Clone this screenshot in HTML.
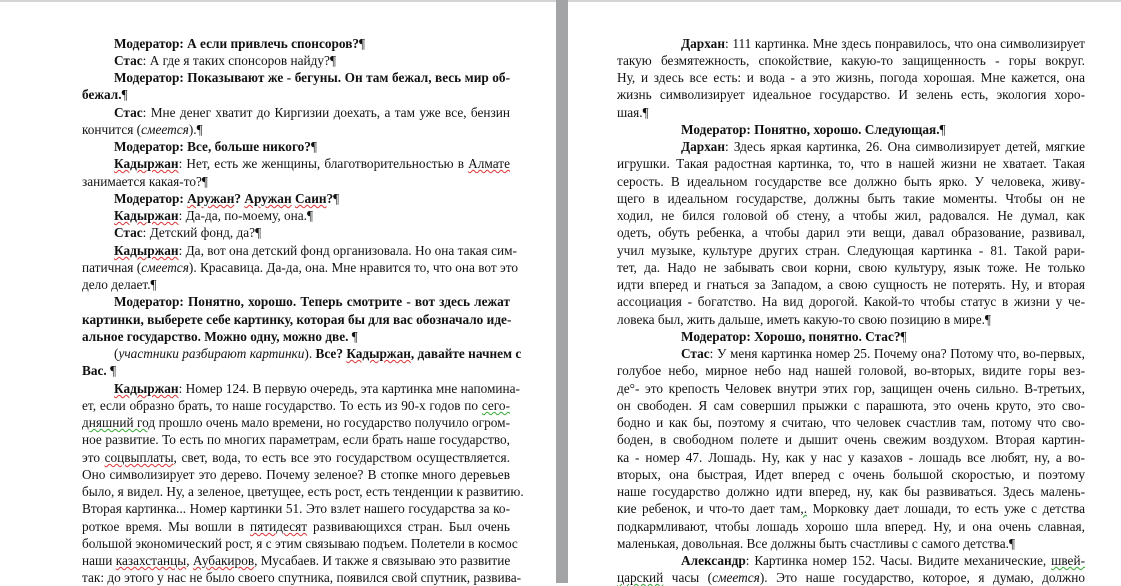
<!DOCTYPE html>
<html><head><meta charset="utf-8"><style>
body{margin:0;width:1121px;height:583px;background:#fff;position:relative;overflow:hidden;font-family:"Liberation Serif","DejaVu Serif",serif;font-size:13.3px;color:#111}
.top{position:absolute;left:0;top:0;width:1121px;height:2px;background:#d4d4d4}
.gap{position:absolute;left:556px;top:0;width:12px;height:583px;background:#a3a4a6}
.l{position:absolute;white-space:nowrap;line-height:17px;height:17px;text-align:justify;text-align-last:justify}
.e{text-align-last:left}
.L{left:82px;width:428px}.Li{left:114px;width:396px}
.R{left:617px;width:468px}.Ri{left:681px;width:404px}
.u{text-decoration:underline wavy #d33;text-decoration-thickness:1px}
.g{text-decoration:underline wavy #3a3;text-decoration-thickness:1px}
</style></head><body>
<div class="top"></div><div class="gap"></div>

<div class="l Li e" style="top:35px"><b>Модератор: А если привлечь спонсоров?</b>¶</div>
<div class="l Li e" style="top:52px"><b>Стас</b>: А где я таких спонсоров найду?¶</div>
<div class="l Li" style="top:69px"><b>Модератор: Показывают же - бегуны. Он там бежал, весь мир об-</b></div>
<div class="l L e" style="top:86px"><b>бежал.</b>¶</div>
<div class="l Li" style="top:104px"><b>Стас</b>: Мне денег хватит до Киргизии доехать, а там уже все, бензин</div>
<div class="l L e" style="top:121px">кончится (<i>смеется</i>).¶</div>
<div class="l Li e" style="top:138px"><b>Модератор: Все, больше никого?</b>¶</div>
<div class="l Li" style="top:155px"><b class="u">Кадыржан</b>: Нет, есть же женщины, благотворительностью в <span class="u">Алмате</span></div>
<div class="l L e" style="top:173px">занимается какая-то?¶</div>
<div class="l Li e" style="top:190px"><b>Модератор: <span class="u">Аружан</span>? <span class="u">Аружан</span> <span class="u">Саин</span>?</b>¶</div>
<div class="l Li e" style="top:207px"><b class="u">Кадыржан</b>: Да-да, по-моему, она.¶</div>
<div class="l Li e" style="top:224px"><b>Стас</b>: Детский фонд, да?¶</div>
<div class="l Li" style="top:242px"><b class="u">Кадыржан</b>: Да, вот она детский фонд организовала. Но она такая сим-</div>
<div class="l L" style="top:259px">патичная (<i>смеется</i>). Красавица. Да-да, она. Мне нравится то, что она вот это</div>
<div class="l L e" style="top:276px">дело делает.¶</div>
<div class="l Li" style="top:293px"><b>Модератор: Понятно, хорошо. Теперь смотрите - вот здесь лежат</b></div>
<div class="l L" style="top:311px"><b>картинки, выберете себе картинку, которая бы для вас обозначало иде-</b></div>
<div class="l L e" style="top:328px"><b>альное государство. Можно одну, можно две.</b> ¶</div>
<div class="l Li" style="top:345px">(<i>участники разбирают картинки</i>). <b>Все? <span class="u">Кадыржан</span>, давайте начнем с</b></div>
<div class="l L e" style="top:362px"><b>Вас.</b> ¶</div>
<div class="l Li" style="top:380px"><b class="u">Кадыржан</b>: Номер 124. В первую очередь, эта картинка мне напомина-</div>
<div class="l L" style="top:397px">ет, если образно брать, то наше государство. То есть из 90-х годов по <span class="g">сего-</span></div>
<div class="l L" style="top:414px"><span class="g">дняшний год</span> прошло очень мало времени, но государство получило огром-</div>
<div class="l L" style="top:431px">ное развитие. То есть по многих параметрам, если брать наше государство,</div>
<div class="l L" style="top:449px">это <span class="u">соцвыплаты</span>, свет, вода, то есть все это государством осуществляется.</div>
<div class="l L" style="top:466px">Оно символизирует это дерево. Почему зеленое? В стопке много деревьев</div>
<div class="l L" style="top:483px">было, я видел. Ну, а зеленое, цветущее, есть рост, есть тенденции к развитию.</div>
<div class="l L" style="top:500px">Вторая картинка... Номер картинки 51. Это взлет нашего государства за ко-</div>
<div class="l L" style="top:518px">роткое время. Мы вошли в <span class="u">пятидесят</span> развивающихся стран. Был очень</div>
<div class="l L" style="top:535px">большой экономический рост, я с этим связываю подъем. Полетели в космос</div>
<div class="l L" style="top:552px">наши <span class="u">казахстанцы</span>, <span class="u">Аубакиров</span>, Мусабаев. И также я связываю это развитие</div>
<div class="l L" style="top:569px">так: до этого у нас не было своего спутника, появился свой спутник, развива-</div>

<div class="l Ri" style="top:35px"><b>Дархан</b>: 111 картинка. Мне здесь понравилось, что она символизирует</div>
<div class="l R" style="top:52px">такую безмятежность, спокойствие, какую-то защищенность - горы вокруг.</div>
<div class="l R" style="top:69px">Ну, и здесь все есть: и вода - а это жизнь, погода хорошая. Мне кажется, она</div>
<div class="l R" style="top:86px">жизнь символизирует идеальное государство. И зелень есть, экология хоро-</div>
<div class="l R e" style="top:104px">шая.¶</div>
<div class="l Ri e" style="top:121px"><b>Модератор: Понятно, хорошо. Следующая.</b>¶</div>
<div class="l Ri" style="top:138px"><b>Дархан</b>: Здесь яркая картинка, 26. Она символизирует детей, мягкие</div>
<div class="l R" style="top:155px">игрушки. Такая радостная картинка, то, что в нашей жизни не хватает. Такая</div>
<div class="l R" style="top:173px">серость. В идеальном государстве все должно быть ярко. У человека, живу-</div>
<div class="l R" style="top:190px">щего в идеальном государстве, должны быть такие моменты. Чтобы он не</div>
<div class="l R" style="top:207px">ходил, не бился головой об стену, а чтобы жил, радовался. Не думал, как</div>
<div class="l R" style="top:224px">одеть, обуть ребенка, а чтобы дарил эти вещи, давал образование, развивал,</div>
<div class="l R" style="top:242px">учил музыке, культуре других стран. Следующая картинка - 81. Такой рари-</div>
<div class="l R" style="top:259px">тет, да. Надо не забывать свои корни, свою культуру, язык тоже. Не только</div>
<div class="l R" style="top:276px">идти вперед и гнаться за Западом, а свою сущность не потерять. Ну, и вторая</div>
<div class="l R" style="top:293px">ассоциация - богатство. На вид дорогой. Какой-то чтобы статус в жизни у че-</div>
<div class="l R e" style="top:311px">ловека был, жить дальше, иметь какую-то свою позицию в мире.¶</div>
<div class="l Ri e" style="top:328px"><b>Модератор: Хорошо, понятно. Стас?</b>¶</div>
<div class="l Ri" style="top:345px"><b>Стас</b>: У меня картинка номер 25. Почему она? Потому что, во-первых,</div>
<div class="l R" style="top:362px">голубое небо, мирное небо над нашей головой, во-вторых, видите горы вез-</div>
<div class="l R" style="top:380px">де°- это крепость Человек внутри этих гор, защищен очень сильно. В-третьих,</div>
<div class="l R" style="top:397px">он свободен. Я сам совершил прыжки с парашюта, это очень круто, это сво-</div>
<div class="l R" style="top:414px">бодно и как бы, поэтому я считаю, что человек счастлив там, потому что сво-</div>
<div class="l R" style="top:431px">боден, в свободном полете и дышит очень свежим воздухом. Вторая картин-</div>
<div class="l R" style="top:449px">ка - номер 47. Лошадь. Ну, как у нас у казахов - лошадь все любят, ну, а во-</div>
<div class="l R" style="top:466px">вторых, она быстрая, Идет вперед с очень большой скоростью, и поэтому</div>
<div class="l R" style="top:483px">наше государство должно идти вперед, ну, как бы развиваться. Здесь малень-</div>
<div class="l R" style="top:500px">кие ребенок, и что-то дает там<span class="g">,.</span> Морковку дает лошади, то есть уже с детства</div>
<div class="l R" style="top:518px">подкармливают, чтобы лошадь хорошо шла вперед. Ну, и она очень славная,</div>
<div class="l R e" style="top:535px">маленькая, довольная. Все должны быть счастливы с самого детства.¶</div>
<div class="l Ri" style="top:552px"><b>Александр</b>: Картинка номер 152. Часы. Видите механические, <span class="g">швей-</span></div>
<div class="l R" style="top:569px"><span class="g">царский</span> часы (<i>смеется</i>). Это наше государство, которое, я думаю, должно</div>
</body></html>
